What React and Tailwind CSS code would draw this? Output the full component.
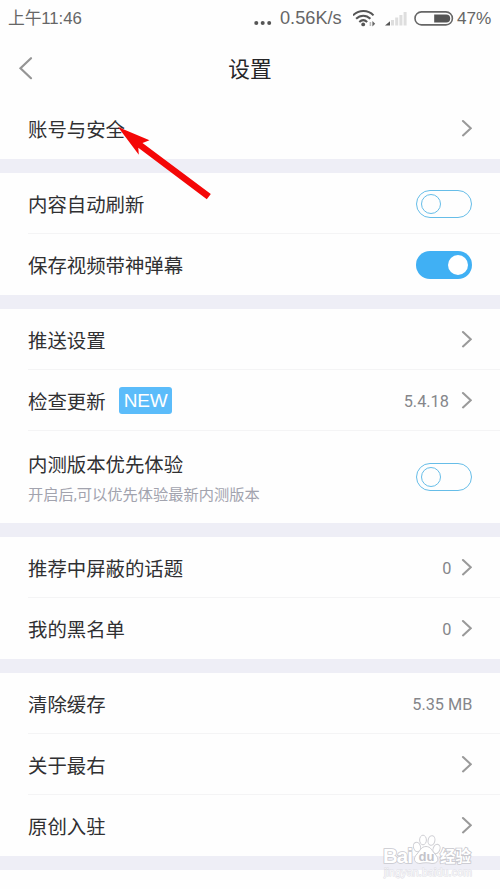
import React from 'react';

const Chevron = () => (
  <svg className="h-[18px] w-[11px] flex-shrink-0" viewBox="0 0 11 18" fill="none">
    <path d="M2 2 L9.8 9.2 L2 16.4" stroke="#9a9a9a" strokeWidth="2.1" strokeLinecap="round" />
  </svg>
);

const Toggle = ({ on }) =>
  on ? (
    <span className="mt-px flex h-7 w-14 flex-shrink-0 items-center justify-end rounded-full bg-[#40b0f4] pr-1">
      <span className="h-5 w-5 rounded-full bg-white" />
    </span>
  ) : (
    <span className="mt-px flex h-7 w-14 flex-shrink-0 items-center rounded-full border border-[#66bde8] pl-[4px]">
      <span className="h-5 w-5 rounded-full border border-[#66bde8]" />
    </span>
  );

// One line of the list. The divider starts at the label, not at the screen edge.
const Row = ({ label, badge, hint, value, right, last }) => (
  <div className="pl-7">
    <div
      className={`flex items-center justify-between border-b pr-[27.6px] ${hint ? 'h-[92px]' : 'h-[61px]'} ${
        last ? 'border-transparent' : 'border-[#f4f4f5]'
      }`}
    >
      <div className={hint ? 'pt-[6px]' : 'pt-0'}>
        <div className="flex items-center text-[19.4px] leading-7 text-[#303032]">
          <span className={hint ? '' : 'pt-[5px]'}>{label}</span>
          {badge && (
            <span className="ml-[13.5px] h-[27px] w-[53px] rounded-[3px] bg-[#5bbcfa] text-center font-['Liberation_Sans',sans-serif] text-[19px] leading-[27px] tracking-[-0.3px] text-white">
              {badge}
            </span>
          )}
        </div>
        {hint && <p className="mt-[3px] text-[15.25px] leading-6 text-[#a2a3ae]">{hint}</p>}
      </div>
      <div className="flex items-center">
        {value && (
          <span
            className={`pt-[3px] text-[16.3px] leading-5 text-[#85868a] ${
              right ? (value.length > 1 ? 'mr-[12.5px]' : 'mr-[10px]') : ''
            }`}
          >
            {value}
          </span>
        )}
        {right}
      </div>
    </div>
  </div>
);

const Gap = () => <div className="h-3.5 bg-[#eeeef6]" />;

const StatusBar = () => (
  <div className="flex h-[38px] items-center pl-2 pr-2 font-['Liberation_Sans','Noto_Sans_CJK_SC',sans-serif] text-[#666]">
    <span className="text-[16.8px] tracking-[-0.1px]">上午11:46</span>
    <div className="ml-auto flex items-center">
      <svg className="mt-2 h-2 w-[18px]" viewBox="0 0 18 8" fill="#555">
        <circle cx="2.3" cy="4" r="2" />
        <circle cx="8.7" cy="4" r="2" />
        <circle cx="15.2" cy="4" r="2" />
      </svg>
      <span className="ml-2 w-[63px] whitespace-nowrap text-[18.2px]">0.56K/s</span>
      <svg className="ml-[10px] h-[18px] w-6" viewBox="0 0 24 18" fill="none" stroke="#555" strokeWidth="2">
        <path d="M0 5.4 C6 -.4 15 -.4 20.5 5.4" />
        <path d="M3.1 8.8 C7.3 4.6 13.2 4.6 17.4 8.8" />
        <path d="M6.3 12 C8.8 9.6 11.7 9.6 14.2 12" />
        <circle cx="10.2" cy="14.4" r="1.9" fill="#555" stroke="none" />
        <path d="M17.4 12v4" strokeWidth="1.6" stroke="#bbb" />
        <path d="M19.4 11l2.8 2.8-2.8 2.8z" fill="#666" stroke="none" />
      </svg>
      <svg className="ml-[8px] mr-px h-4 w-[23px]" viewBox="0 0 23 16">
        <path d="M0 14.5 L5 10.3 V14.5Z" fill="#555" />
        <path d="M6 9h3v5.5H6zM10.2 6.5h3v8h-3zM14.4 4h3v10.5h-3zM18.6 1h3v13.5h-3z" fill="#dedede" />
      </svg>
      <svg className="ml-[5px] h-4 w-[40px]" viewBox="0 0 40 16">
        <rect x="1" y="0.9" width="37.4" height="13" rx="6.5" fill="none" stroke="#666" strokeWidth="1.6" />
        <path d="M20.2 3.4h12a4 4 0 0 1 0 8h-12z" fill="#555" />
      </svg>
      <span className="ml-[3px] w-[35px] whitespace-nowrap text-[17.2px]">47%</span>
    </div>
  </div>
);

const Arrow = () => (
  <svg className="pointer-events-none absolute left-[116px] top-[124px] h-[76px] w-[98px]" viewBox="0 0 98 76">
    <path d="M2 3 L33.5 16.3 L26.5 19 L94.8 70 L90.8 75.2 L22.3 23.8 L22.8 30.8 Z" fill="#f40707" />
  </svg>
);

const Watermark = () => (
  <div className="absolute left-[382px] top-[832px] h-[50px] w-[94px]">
    <svg className="h-full w-full font-['Liberation_Sans','Noto_Sans_CJK_SC',sans-serif] font-bold" viewBox="0 0 94 50">
      <g fill="#fff" stroke="#cfcfd4" strokeWidth="1">
        <ellipse cx="35" cy="15" rx="3.5" ry="4.8" transform="rotate(-18 35 15)" />
        <ellipse cx="41" cy="8" rx="3.4" ry="4.8" />
        <ellipse cx="49.5" cy="8.5" rx="3.4" ry="4.8" transform="rotate(12 49.5 8.5)" />
        <ellipse cx="54.5" cy="17" rx="3.4" ry="4.8" transform="rotate(20 54.5 17)" />
        <path d="M44 14.5 C39 14.5 38 19 35 22 C30 27 33 31.5 38 31.5 C42 30.5 46 30.5 50 31.5 C56 31.5 58 27 53 22 C50 19 49 14.5 44 14.5Z" />
      </g>
      <g fill="#fff" stroke="#c8c8ce" strokeWidth="1.6" paintOrder="stroke">
        <text x="1" y="30.5" fontSize="20.5" textLength="30">Bai</text>
        <text x="58" y="30" fontSize="15.5" textLength="31">经验</text>
      </g>
      <text x="36.5" y="29" fontSize="13" fill="#c3c3ca">du</text>
      <text x="2" y="43.5" fontSize="10.5" fontWeight="400" textLength="88" fill="#f8f8fb" stroke="#dfdfe5" strokeWidth="1" paintOrder="stroke">
        jingyan.baidu.com
      </text>
    </svg>
  </div>
);

const App = () => (
  <div className="relative h-[889px] w-[500px] overflow-hidden bg-[#fefefe] font-['Roboto','Noto_Sans_CJK_SC',sans-serif]">
    <StatusBar />
    <header className="grid h-[60px] grid-cols-[1fr_auto_1fr] items-center pl-[18px] pr-[18px]">
      <svg className="h-6 w-4" viewBox="0 0 16 24" fill="none">
        <path d="M13 2.2 L2.5 12.2 L13 22.2" stroke="#959595" strokeWidth="2.2" strokeLinecap="round" />
      </svg>
      <h1 className="pt-[3px] text-[21.7px] leading-8 text-[#262628]">设置</h1>
    </header>

    <Row label="账号与安全" right={<Chevron />} last />
    <Gap />
    <Row label="内容自动刷新" right={<Toggle />} />
    <Row label="保存视频带神弹幕" right={<Toggle on />} last />
    <Gap />
    <Row label="推送设置" right={<Chevron />} />
    <Row label="检查更新" badge="NEW" value="5.4.18" right={<Chevron />} />
    <Row label="内测版本优先体验" hint="开启后,可以优先体验最新内测版本" right={<Toggle />} last />
    <Gap />
    <Row label="推荐中屏蔽的话题" value="0" right={<Chevron />} />
    <Row label="我的黑名单" value="0" right={<Chevron />} last />
    <Gap />
    <Row label="清除缓存" value="5.35 MB" />
    <Row label="关于最右" right={<Chevron />} />
    <Row label="原创入驻" right={<Chevron />} last />
    <Gap />

    <Arrow />
    <Watermark />
  </div>
);

export default App;
